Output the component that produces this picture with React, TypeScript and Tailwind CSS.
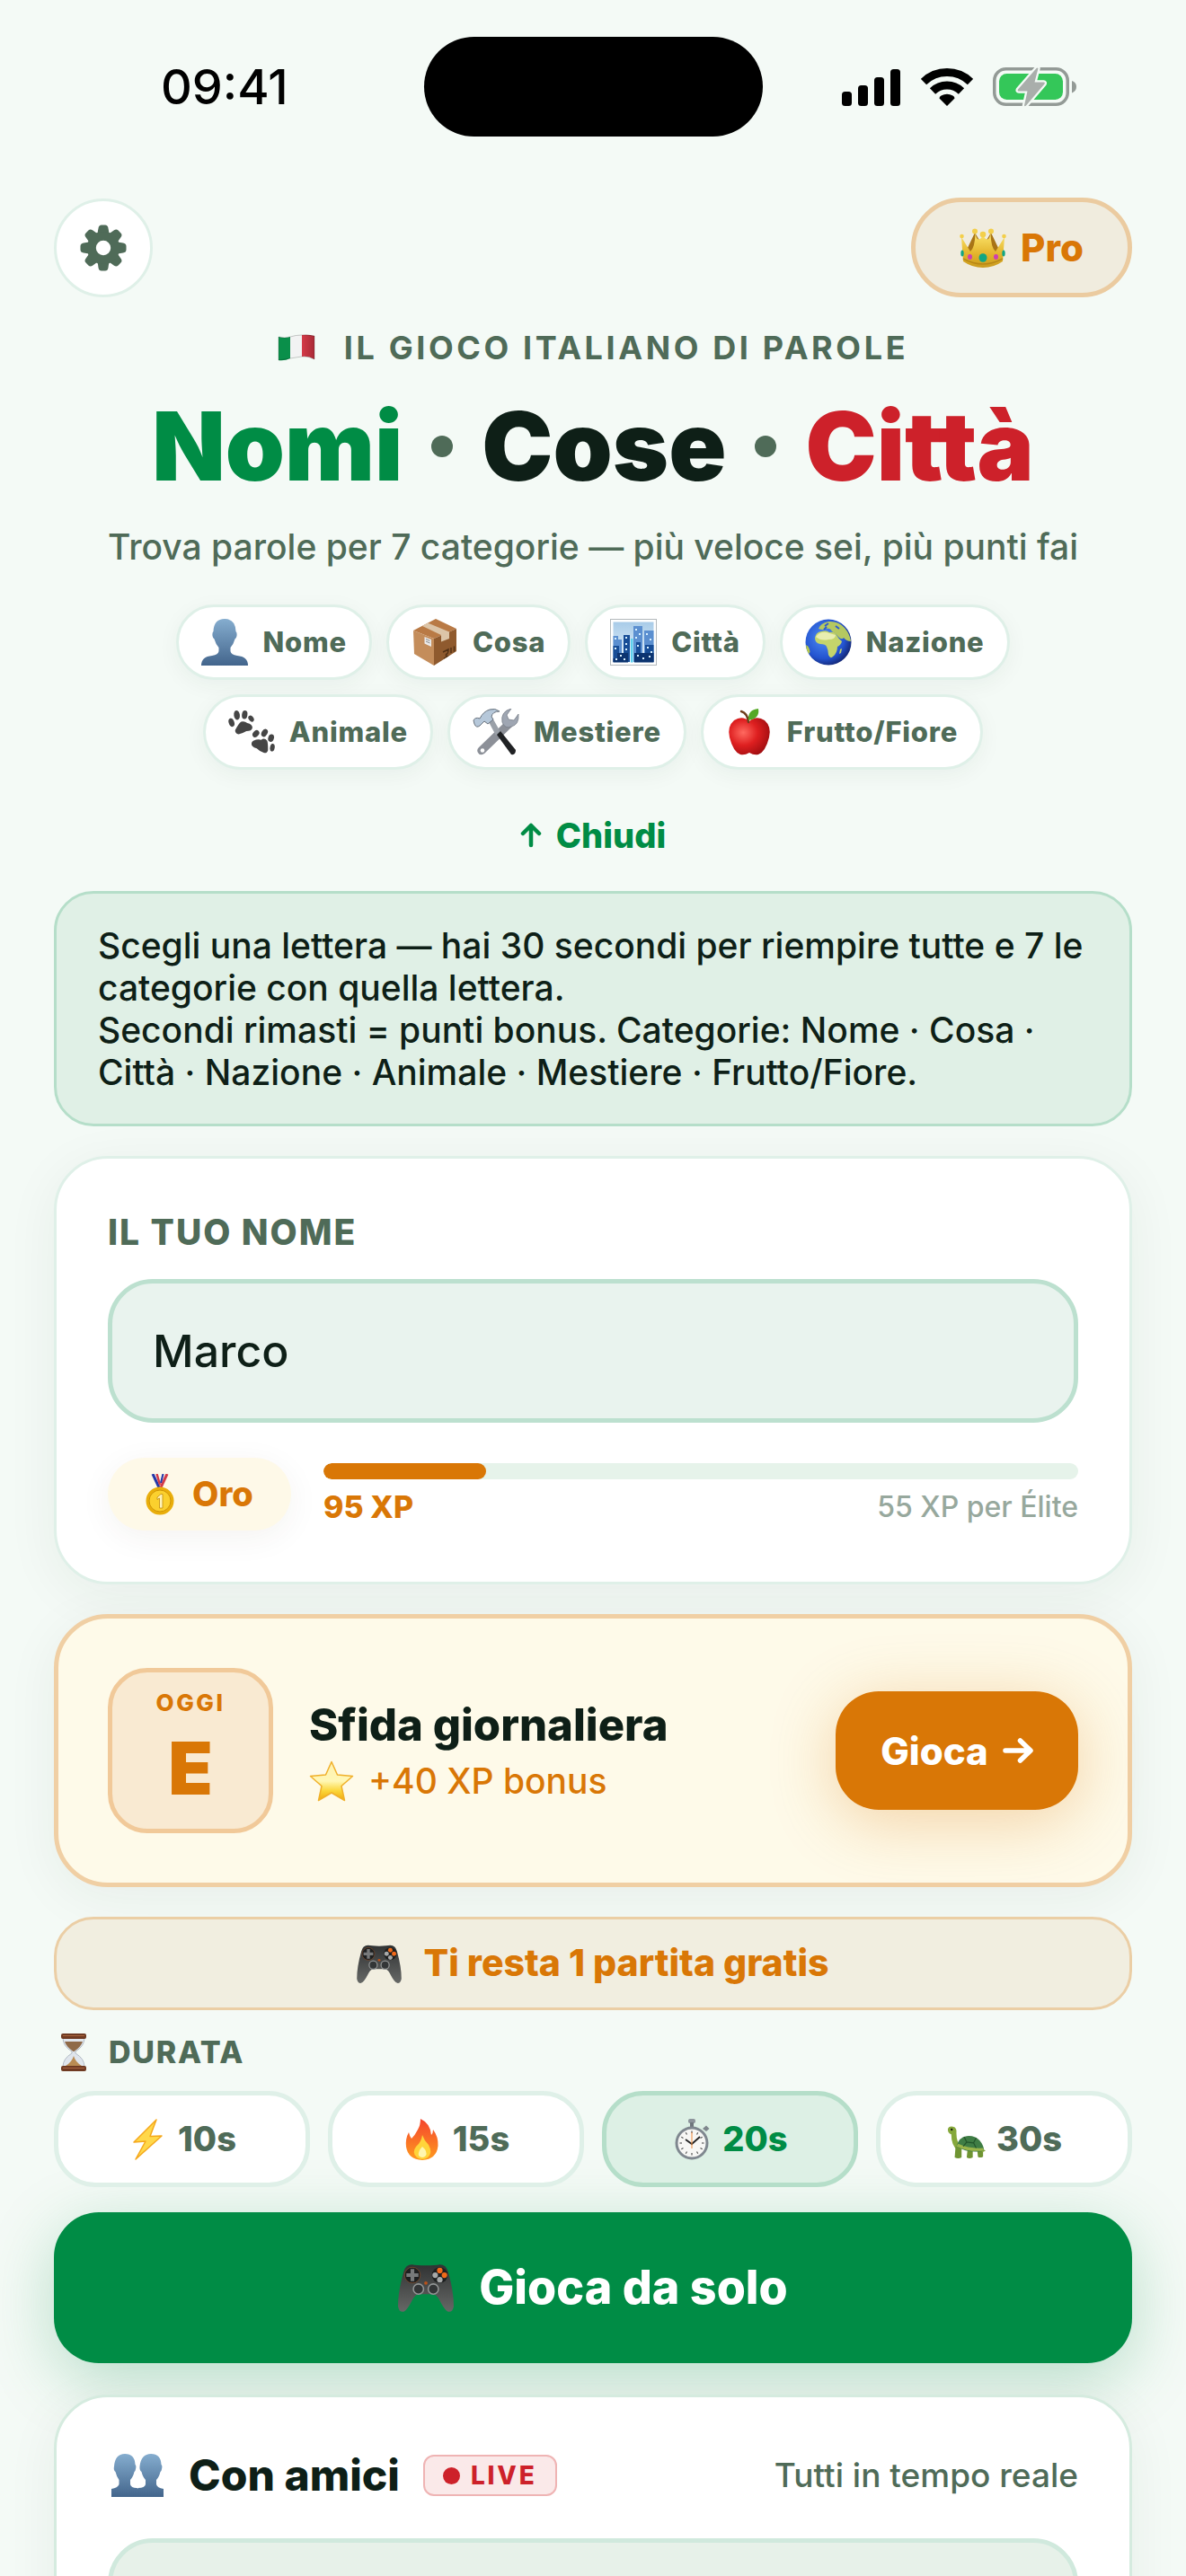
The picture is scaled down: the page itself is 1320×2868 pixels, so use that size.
import React, { useState } from 'react';

type IconProps = { className?: string };

/* ---------- Status bar icons ---------- */

const SignalIcon: React.FC<IconProps> = ({ className }) => (
  <svg className={className} viewBox="0 0 66 42" aria-hidden="true">
    <rect x="0" y="26" width="11" height="16" rx="3.5" />
    <rect x="18" y="19" width="11" height="23" rx="3.5" />
    <rect x="36" y="10" width="11" height="32" rx="3.5" />
    <rect x="54" y="1" width="11" height="41" rx="3.5" />
  </svg>
);

const WifiIcon: React.FC<IconProps> = ({ className }) => (
  <svg className={className} viewBox="0 0 58 42" aria-hidden="true">
    <g fill="none" stroke="#000" strokeWidth="9">
      <path d="M3 15A37.5 37.5 0 0 1 55 15" />
      <path d="M13 25.5A23 23 0 0 1 45 25.5" />
    </g>
    <path d="M29 42L20.5 33.5Q20.5 31.5 22.5 30.6A13.5 13.5 0 0 1 35.5 30.6Q37.5 31.5 37.5 33.5Z" />
  </svg>
);

const BatteryIcon: React.FC<IconProps> = ({ className }) => (
  <svg className={className} viewBox="0 0 94 46" aria-hidden="true">
    <rect x="1.75" y="2.75" width="81.5" height="39.5" rx="13" fill="none" stroke="#939a96" strokeWidth="3.5" />
    <rect x="7" y="8" width="71" height="29" rx="8.5" fill="#34c759" />
    <path d="M88 16Q93 17.5 93 22.5T88 29.5Z" fill="#939a96" />
    <path
      d="M48.5 2L28 25.5Q27 27.5 29 27.5H38.5L35 43.5Q35.5 44.8 37 43.5L57.5 19.5Q58.5 17.5 56.5 17.5H46.5L50.5 2Q49.5 1 48.5 2Z"
      fill="#a9aeab"
      stroke="#f4faf6"
      strokeWidth="4.5"
      strokeLinejoin="round"
      paintOrder="stroke"
    />
  </svg>
);

/* ---------- Illustrated icons ---------- */

const GearIcon: React.FC<IconProps> = ({ className }) => (
  <svg className={className} viewBox="0 0 52 52" fill="#4f6b58" aria-hidden="true">
    {[0, 45, 90, 135, 180, 225, 270, 315].map((angle) => (
      <path
        key={angle}
        d="M18 12Q20.2 9 20.5 4Q21 0.5 24 0.5H28Q31 0.5 31.5 4Q31.8 9 34 12Z"
        transform={`rotate(${angle} 26 26)`}
      />
    ))}
    <path fillRule="evenodd" d="M26 8a18 18 0 1 0 0 36a18 18 0 1 0 0-36ZM26 17.8a8.2 8.2 0 1 1 0 16.4a8.2 8.2 0 1 1 0-16.4Z" />
  </svg>
);

const CrownIcon: React.FC<IconProps> = ({ className }) => (
  <svg className={className} viewBox="0 0 52 44" aria-hidden="true">
    <defs>
      <linearGradient id="crownGold" x1="0" y1="0" x2="0" y2="1">
        <stop offset="0" stopColor="#fbe36a" />
        <stop offset="0.6" stopColor="#e3b42c" />
        <stop offset="1" stopColor="#c99a1e" />
      </linearGradient>
    </defs>
    <path d="M8 24L17 5L26 20L35 5L44 24L38 30H14Z" fill="#a87416" />
    <path d="M2 10L12 26Q17 22 17.5 6Q20 18 26 8Q32 18 34.5 6Q35 22 40 26L50 10L48 37Q38 44 26 44T4 37Z" fill="url(#crownGold)" />
    <path d="M4 34Q15 40 26 40T48 34" fill="none" stroke="#b88716" strokeWidth="1.5" />
    <g fill="#f3cf4b">
      <circle cx="2.5" cy="9" r="2.3" />
      <circle cx="17" cy="3.5" r="3" />
      <circle cx="26" cy="7" r="3.3" />
      <circle cx="35" cy="3.5" r="3" />
      <circle cx="49.5" cy="9" r="2.3" />
    </g>
    <ellipse cx="26" cy="33" rx="4.5" ry="4.8" fill="#12a683" />
    <ellipse cx="11.5" cy="32" rx="2.5" ry="3" fill="#cf3fb0" />
    <ellipse cx="40.5" cy="32" rx="2.5" ry="3" fill="#cf3fb0" />
    <ellipse cx="3" cy="28" rx="1.7" ry="3.5" fill="#12a683" />
    <ellipse cx="49" cy="28" rx="1.7" ry="3.5" fill="#12a683" />
  </svg>
);

const FlagIcon: React.FC<IconProps> = ({ className }) => (
  <svg className={className} viewBox="0 0 42 30" aria-hidden="true">
    <defs>
      <linearGradient id="flagRed" x1="0" y1="0" x2="1" y2="0">
        <stop offset="0" stopColor="#d43a48" />
        <stop offset="1" stopColor="#a82a36" />
      </linearGradient>
    </defs>
    <path d="M1 3Q8 5 14 3V27Q8 30 1 29Z" fill="#0a8f4a" />
    <path d="M14 3Q20 .5 27 1V25Q20 25 14 27Z" fill="#f2f3f3" />
    <path d="M27 1Q34 0 41 2V28Q34 24 27 25Z" fill="url(#flagRed)" />
    <path d="M1 3Q8 5 14 3T27 1T41 2V28Q34 24 27 25T14 27T1 29Z" fill="none" stroke="#000" strokeOpacity=".2" />
  </svg>
);

const PersonIcon: React.FC<IconProps> = ({ className }) => (
  <svg className={className} viewBox="0 0 52 52" aria-hidden="true">
    <defs>
      <linearGradient id="bust" x1="0" y1="0" x2="0" y2="1">
        <stop offset="0" stopColor="#85adcf" />
        <stop offset="1" stopColor="#43658c" />
      </linearGradient>
    </defs>
    <path d="M26 0Q38 0 38.5 14Q40 15 39.5 19Q39 22 37.5 22.5Q36 28 32.5 32V36Q33 40 40 41Q52 42 52 52H0Q0 42 12 41Q19 40 19.5 36V32Q16 28 14.5 22.5Q13 22 12.5 19Q12 15 13.5 14Q14 0 26 0Z" fill="url(#bust)" />
  </svg>
);

const PeopleIcon: React.FC<IconProps> = ({ className }) => (
  <svg className={className} viewBox="0 0 58 48" aria-hidden="true">
    <defs>
      <linearGradient id="busts" x1="0" y1="0" x2="0" y2="1">
        <stop offset="0" stopColor="#85adcf" />
        <stop offset="1" stopColor="#43658c" />
      </linearGradient>
    </defs>
    <path d="M44 0Q55 0 55.5 12Q57 13 56 17Q55.5 20 54.5 20Q53 26 50 29V34Q51 38 58 39V48H30V38Q37 38 38 34V29Q35 26 33.5 20Q31 18 31.5 14Q33 0 44 0Z" fill="url(#busts)" />
    <path d="M15 0Q26 0 26.5 12Q28 13 27 17Q26.5 20 25.5 20Q24 26 21 29V34Q22 38 28 38Q37 39 38 48H0V39Q7 38 8.5 34V29Q6 26 4.5 20Q2 18 3 14Q4 0 15 0Z" fill="url(#busts)" />
  </svg>
);

const PackageIcon: React.FC<IconProps> = ({ className }) => (
  <svg className={className} viewBox="0 0 52 52" aria-hidden="true">
    <path d="M2 13L27 0L50 11L25 22Z" fill="#b97a45" />
    <path d="M2 13L25 22V52L3 39Z" fill="#c48d5b" />
    <path d="M25 22L50 11V36L25 52Z" fill="#8f5a2e" />
    <path d="M12 8L18 4.5L42 14.5V22L33 25.5V18Z" fill="#dcc5a8" />
    <path d="M14.5 20L22 23V31L14.5 27.5Z" fill="#ececec" />
    <path d="M16 22.5L20.5 24.5M16 25L20.5 27" stroke="#888" strokeWidth="1" />
    <path d="M35 37L41 34Q41 39 38.5 39.5V43M36 44L41 41M44 32V38M47.5 30.5V36.5" fill="none" stroke="#4f2f14" strokeWidth="1.4" />
  </svg>
);

const CityIcon: React.FC<IconProps> = ({ className }) => (
  <svg className={className} viewBox="0 0 52 52" aria-hidden="true">
    <defs>
      <linearGradient id="citySky" x1="0" y1="0" x2="0" y2="1">
        <stop offset="0" stopColor="#a8cbe8" />
        <stop offset="1" stopColor="#eaf6fd" />
      </linearGradient>
    </defs>
    <rect x=".5" y=".5" width="51" height="51" fill="#fff" stroke="#b3b9bb" />
    <rect x="3.5" y="3.5" width="45" height="45" fill="url(#citySky)" />
    <path d="M3.5 19H9V23H13V48H3.5ZM26 8H36V48H26ZM38 13H48.5V48H38Z" fill="#5b8fd0" />
    <path d="M3.5 30H10V48H3.5ZM15 18H22V48H15ZM29 26H34V48H29ZM39 29H48.5V48H39Z" fill="#174d96" />
    <path d="M8 38H20V48.5H3.5V44H8ZM27 38H48.5V48.5H27Z" fill="#0c3470" />
    <path d="M23 22H25.5V48.5H23Z" fill="#5fd0ee" />
    <g fill="#d9f1ff">
      <path d="M5 21h2v2H5zM5 32h2v2H5zM17 20h2v2h-2zM17 27h2v2h-2zM17 33h2v2h-2zM28 11h2v2h-2zM32 16h2v2h-2zM28 20h2v2h-2zM40 16h2v2h-2zM44 22h2v2h-2zM41 31h2v2h-2zM45 36h2v2h-2zM30 29h2v2h-2zM30 40h2v2h-2zM36 43h2v2h-2zM43 41h2v2h-2zM11 40h2v2h-2zM15 44h2v2h-2zM6 44h2v2H6z" />
    </g>
  </svg>
);

const GlobeIcon: React.FC<IconProps> = ({ className }) => (
  <svg className={className} viewBox="0 0 52 52" aria-hidden="true">
    <defs>
      <radialGradient id="ocean" cx="0.4" cy="0.4" r="0.65">
        <stop offset="0" stopColor="#4f8df5" />
        <stop offset="0.7" stopColor="#2353cf" />
        <stop offset="1" stopColor="#12246f" />
      </radialGradient>
    </defs>
    <circle cx="26" cy="26" r="25.5" fill="url(#ocean)" />
    <path d="M11 21Q12 15 18 14Q24 12 27 15Q33 14 35 18Q37 22 41 25Q40 29 36 31Q36 38 31 42Q28 45 26 40Q26 35 24 31Q23 28 17 28Q11 27 11 21Z" fill="#c5d56b" />
    <path d="M12 20Q16 14 24 15L34 18Q34 23 26 23Q18 25 12 20Z" fill="#e8eeb0" />
    <path d="M15 11Q17 5 26 3Q37 2 44 10Q50 17 51 25Q46 25 43 21Q41 24 37 20Q34 16 30 14Q28 10 24 11Q20 13 15 11Z" fill="#b5c860" />
    <path d="M1 29Q5 31 5.5 37L4 39Q1 34 1 29Z" fill="#b9cb4a" />
    <path d="M39 34L41 33L40 38L38 39Z" fill="#c5d56b" />
    <path d="M22 8L26 5M34 8L38 11M21 12L24 9" stroke="#2b5bd0" strokeWidth="2" />
  </svg>
);

const PawsIcon: React.FC<IconProps> = ({ className }) => (
  <svg className={className} viewBox="0 0 54 52" fill="#454545" aria-hidden="true">
    <g>
      <ellipse cx="3.8" cy="15" rx="3.2" ry="5" transform="rotate(-18 3.8 15)" />
      <ellipse cx="10" cy="6.5" rx="3.4" ry="5.5" transform="rotate(-8 10 6.5)" />
      <ellipse cx="19" cy="6" rx="3.2" ry="5" transform="rotate(8 19 6)" />
      <ellipse cx="26.5" cy="10.5" rx="2.8" ry="4" transform="rotate(-35 26.5 10.5)" />
      <path d="M15 14Q19 13 22 15.5Q28 17 28 21Q27 25 21 25Q16 28 12 28.5Q8 28 8 24Q12 16 15 14Z" />
    </g>
    <g>
      <ellipse cx="32" cy="28" rx="3.3" ry="4.5" transform="rotate(42 32 28)" />
      <ellipse cx="42" cy="27" rx="3.3" ry="4.8" transform="rotate(30 42 27)" />
      <ellipse cx="49.5" cy="33" rx="3.3" ry="4.5" transform="rotate(18 49.5 33)" />
      <ellipse cx="51" cy="44" rx="2.7" ry="4.5" transform="rotate(10 51 44)" />
      <path d="M29 36Q34 34 38 35Q42 32 45 36Q46 38 46 47Q45 51 41 50Q37 49 33 45Q26 43 27 39Q27 37 29 36Z" />
    </g>
  </svg>
);

const ToolsIcon: React.FC<IconProps> = ({ className }) => (
  <svg className={className} viewBox="0 0 52 52" aria-hidden="true">
    <path d="M37 14L44 20L13 50Q8 53 6 49Q4 46 7 43Z" fill="#8c9098" />
    <path d="M43 0Q31 3 33 15Q36 23 43 20Q52 18 51 6L46 13L40 12L38 7Z" fill="#9fa6b2" stroke="#777d88" strokeWidth=".8" />
    <circle cx="11" cy="46.5" r="2.3" fill="#fff" />
    <path d="M17 13L22 10L31 26L26 30Z" fill="#9aa0a8" />
    <path d="M27 29L31 25L48 46Q48 52 43 51Z" fill="#202224" />
    <path d="M1 13Q3 9 8 11Q12 3 19 1Q25-1 30 3Q22 3 21 9L23 12L17 17L13 14L8 19Q4 22 2 17Z" fill="#b6c8da" stroke="#68717c" strokeWidth="1" />
  </svg>
);

const AppleIcon: React.FC<IconProps> = ({ className }) => (
  <svg className={className} viewBox="0 0 52 52" aria-hidden="true">
    <defs>
      <radialGradient id="appleRed" cx="0.35" cy="0.4" r="0.7">
        <stop offset="0" stopColor="#ff6a60" />
        <stop offset="0.5" stopColor="#de1f20" />
        <stop offset="1" stopColor="#9f0d10" />
      </radialGradient>
    </defs>
    <path d="M26 14Q34 7 43 13Q51 20 48 32Q44 48 36 51Q31 52 26 49Q21 52 16 51Q8 48 4 32Q1 20 9 13Q18 7 26 14Z" fill="url(#appleRed)" />
    <path d="M17 3Q24 5 25 15" fill="none" stroke="#6d3d1c" strokeWidth="2.5" strokeLinecap="round" />
    <path d="M25 13Q24 1 36 0Q38 11 25 13Z" fill="#55a826" />
  </svg>
);

const MedalIcon: React.FC<IconProps> = ({ className }) => (
  <svg className={className} viewBox="0 0 32 46" aria-hidden="true">
    <path d="M8 0L15 15" stroke="#2438a8" strokeWidth="3" />
    <path d="M12.5 0L16 12" stroke="#d33b48" strokeWidth="2.5" />
    <path d="M24 0L17 15" stroke="#d33b48" strokeWidth="3" />
    <path d="M19.5 0L17 10" stroke="#2438a8" strokeWidth="2" />
    <circle cx="16" cy="30" r="15.5" fill="#e9ae0b" />
    <circle cx="16" cy="30" r="12" fill="#fbd02e" stroke="#cf9407" />
    <path d="M13 26L17 22.5H19V38H15.5V27L13 28.5Z" fill="#fff3b8" stroke="#c28b0a" strokeWidth=".8" />
  </svg>
);

const StarIcon: React.FC<IconProps> = ({ className }) => (
  <svg className={className} viewBox="0 0 50 46" aria-hidden="true">
    <defs>
      <linearGradient id="starGold" x1="0" y1="0" x2="0" y2="1">
        <stop offset="0" stopColor="#fff2b0" />
        <stop offset="0.5" stopColor="#fff7b5" />
        <stop offset="0.75" stopColor="#fbd63a" />
        <stop offset="1" stopColor="#f0a90c" />
      </linearGradient>
    </defs>
    <path d="M25 1.5L31.5 16L48.5 17.5L36 28.5L39.5 44.5L25 36L10.5 44.5L14 28.5L1.5 17.5L18.5 16Z" fill="url(#starGold)" stroke="#f0b02a" strokeWidth="1.5" strokeLinejoin="round" />
  </svg>
);

const GamepadIcon: React.FC<IconProps> = ({ className }) => (
  <svg className={className} viewBox="0 0 60 52" aria-hidden="true">
    <defs>
      <linearGradient id="padBody" x1="0" y1="0" x2="0" y2="1">
        <stop offset="0" stopColor="#303233" />
        <stop offset="1" stopColor="#666866" />
      </linearGradient>
    </defs>
    <path d="M15 1Q20 2 30 2T45 1Q52 1 54 9Q60 30 60 46Q59 52 55 52Q51 52 44 38Q41 33 37 33H23Q19 33 16 38Q9 52 5 52Q1 52 0 46Q0 30 6 9Q8 1 15 1Z" fill="url(#padBody)" />
    <circle cx="15.5" cy="12.5" r="8.5" fill="#1d1f20" stroke="#7b4a2c" strokeWidth=".8" />
    <circle cx="45" cy="12.5" r="8.5" fill="#1d1f20" />
    <path d="M13.5 6h4v4.5H22v4h-4.5V19h-4v-4.5H9v-4h4.5Z" fill="#77797a" />
    <circle cx="45" cy="7.5" r="3" fill="#f26a1b" />
    <circle cx="50" cy="12.5" r="3" fill="#f26a1b" />
    <circle cx="40" cy="12.5" r="3" fill="#a7a9a9" />
    <circle cx="45" cy="17.5" r="3" fill="#a7a9a9" />
    <circle cx="30" cy="21" r="1.8" fill="#b9521b" />
    <circle cx="22" cy="27.5" r="5.5" fill="#333637" stroke="#939696" strokeWidth="1.5" />
    <circle cx="38" cy="27.5" r="5.5" fill="#333637" stroke="#939696" strokeWidth="1.5" />
  </svg>
);

const HourglassIcon: React.FC<IconProps> = ({ className }) => (
  <svg className={className} viewBox="0 0 28 42" aria-hidden="true">
    <path d="M2 5H26Q26 14 16 20V22Q26 28 26 37H2Q2 28 12 22V20Q2 14 2 5Z" fill="#dfe5ec" stroke="#b4bcc6" />
    <path d="M4 9H24Q22 15 14.5 20H13.5Q6 15 4 9Z" fill="#8f6a48" />
    <path d="M14 25Q16 32 23 36H5Q12 32 14 25Z" fill="#b98b52" />
    <rect x="0" y="0" width="28" height="6" rx="2" fill="#6f3a22" />
    <rect x="0" y="36" width="28" height="6" rx="2" fill="#6f3a22" />
    <path d="M2 2.5H26M2 38.5H26" stroke="#a9653e" />
  </svg>
);

const BoltIcon: React.FC<IconProps> = ({ className }) => (
  <svg className={className} viewBox="0 0 44 46" aria-hidden="true">
    <path d="M32 1L7 26L20 25L9 45L38 19L25 19.5Z" fill="#ffd84a" stroke="#f5a81c" strokeWidth="1.5" strokeLinejoin="round" />
  </svg>
);

const FireIcon: React.FC<IconProps> = ({ className }) => (
  <svg className={className} viewBox="0 0 44 46" aria-hidden="true">
    <defs>
      <linearGradient id="flame" x1="0" y1="0" x2="0" y2="1">
        <stop offset="0" stopColor="#f4442e" />
        <stop offset="1" stopColor="#ff9a1f" />
      </linearGradient>
    </defs>
    <path d="M20 0Q31 5 32 18Q34 16 34 12Q40 20 39.5 30Q38 45 22 46Q6 45 4 31Q3 22 7 15Q8 20 10 22Q14 18 17 12Q20 7 20 0Z" fill="url(#flame)" />
    <path d="M22 18Q24 24 29 29Q34 38 28 43Q22 47 16 43Q10 38 15 31Q21 26 22 18Z" fill="#ffd43a" />
    <path d="M22 31Q28 36 26 41Q22 45 18 41Q17 36 22 31Z" fill="#fff6b0" />
  </svg>
);

const StopwatchIcon: React.FC<IconProps> = ({ className }) => (
  <svg className={className} viewBox="0 0 44 46" aria-hidden="true">
    <rect x="18" y="0" width="8" height="5" rx="2" fill="#8d949b" />
    <rect x="20" y="4" width="4" height="5" fill="#6f767d" />
    <path d="M34 11L38 7.5L41.5 11L38 14Z" fill="#7f868d" />
    <circle cx="22" cy="27" r="18.5" fill="#7f878f" />
    <circle cx="22" cy="27" r="15.5" fill="#f7f7f5" />
    <g stroke="#555" strokeWidth="1.2">
      {[0, 30, 60, 90, 120, 150, 180, 210, 240, 270, 300, 330].map((angle) => (
        <path key={angle} d="M22 13.5V16" transform={`rotate(${angle} 22 27)`} />
      ))}
    </g>
    <path d="M15 23L22 28L31 20" fill="none" stroke="#222" strokeWidth="1.8" />
    <path d="M22 15V33" stroke="#f08a3c" strokeWidth="1" />
  </svg>
);

const TurtleIcon: React.FC<IconProps> = ({ className }) => (
  <svg className={className} viewBox="0 0 46 46" aria-hidden="true">
    <path d="M2 11Q3 7 8 8Q13 9 12 16Q12 27 18 32L14 36Q6 31 6 17Q2 16 2 11Z" fill="#86a83b" />
    <path d="M11 31H18V44Q14 46 10 44ZM25 34H31V44Q27 46 24 44ZM36 32H43V43Q39 45 37 43Z" fill="#6f9432" />
    <path d="M41 33L46 36L42 38Z" fill="#86a83b" />
    <path d="M12 31Q15 20 24 19Q33 18 39 24Q44 30 44 36Q27 40 12 31Z" fill="#3f7d45" />
    <path d="M12 31Q27 38 44 36L43 33Q27 34 14 28Z" fill="#9bb44a" />
    <path d="M21 20L24 26L20 31M24 26L32 27L35 33M32 27L35 21" fill="none" stroke="#23552b" strokeWidth="1.2" />
    <circle cx="6.5" cy="11.5" r="1.2" fill="#111" />
  </svg>
);

const ArrowRightIcon: React.FC<IconProps> = ({ className }) => (
  <svg className={className} viewBox="0 0 34 30" fill="none" stroke="currentColor" strokeWidth="5.5" strokeLinecap="round" strokeLinejoin="round" aria-hidden="true">
    <path d="M3 15H30M19.5 4L31 15L19.5 26" />
  </svg>
);

const ArrowUpIcon: React.FC<IconProps> = ({ className }) => (
  <svg className={className} viewBox="0 0 24 28" fill="none" stroke="currentColor" strokeWidth="4.5" strokeLinecap="round" strokeLinejoin="round" aria-hidden="true">
    <path d="M12 25V3M3 12L12 3L21 12" />
  </svg>
);

/* ---------- Data ---------- */

const categoryRows = [
  [
    { label: 'Nome', Icon: PersonIcon },
    { label: 'Cosa', Icon: PackageIcon },
    { label: 'Città', Icon: CityIcon },
    { label: 'Nazione', Icon: GlobeIcon },
  ],
  [
    { label: 'Animale', Icon: PawsIcon },
    { label: 'Mestiere', Icon: ToolsIcon },
    { label: 'Frutto/Fiore', Icon: AppleIcon },
  ],
];

const durations = [
  { seconds: 10, Icon: BoltIcon },
  { seconds: 15, Icon: FireIcon },
  { seconds: 20, Icon: StopwatchIcon },
  { seconds: 30, Icon: TurtleIcon },
];

/* ---------- Sections ---------- */

const StatusBar: React.FC = () => (
  <div className="grid grid-cols-[1fr_377px_1fr] items-center pt-[41px]">
    <span className="pl-[119px] text-[54px] leading-[60px] font-medium text-black">09:41</span>
    <div className="h-[111px] rounded-full bg-black" />
    <div className="flex items-center justify-end gap-[22px] pr-[61px]">
      <SignalIcon className="h-[42px] w-[66px]" />
      <WifiIcon className="h-[42px] w-[58px]" />
      <BatteryIcon className="h-[46px] w-[94px]" />
    </div>
  </div>
);

const Hero: React.FC = () => (
  <div className="flex flex-col items-center">
    <p className="flex items-center gap-8 text-[36px] leading-[48px] font-bold tracking-widest text-[#4f6b58]">
      <FlagIcon className="h-[30px] w-[42px]" />
      IL GIOCO ITALIANO DI PAROLE
    </p>
    <h1 className="mt-[26px] flex items-center gap-8 text-[106px] leading-[120px] font-black">
      <span className="text-[#008c45]">Nomi</span>
      <span className="size-6 rounded-full bg-[#4f6b58]" />
      <span className="text-[#0e1f17]">Cose</span>
      <span className="size-6 rounded-full bg-[#4f6b58]" />
      <span className="text-[#cd212a]">Città</span>
    </h1>
    <p className="mt-7 text-[39px] leading-[48px] font-medium text-[#4f6b58]">
      Trova parole per 7 categorie — più veloce sei, più punti fai
    </p>
  </div>
);

const Categories: React.FC = () => (
  <div className="mt-10 flex flex-col gap-4">
    {categoryRows.map((row, index) => (
      <ul key={index} className="flex justify-center gap-4">
        {row.map(({ label, Icon }) => (
          <li
            key={label}
            className="flex h-[84px] items-center gap-4 rounded-full border-3 border-[#dff0e8] bg-white px-[25px] text-[31px] font-extrabold tracking-wide text-[#4f6b58] shadow-[0_6px_24px_rgba(20,60,40,0.05)]"
          >
            <Icon className="size-[52px]" />
            {label}
          </li>
        ))}
      </ul>
    ))}
  </div>
);

const PlayerCard: React.FC = () => {
  const [name, setName] = useState('Marco');
  const progress = 21.5;

  return (
    <section className="rounded-[60px] border-3 border-[#dff0e8] bg-white p-[57px] shadow-[0_12px_60px_rgba(40,50,30,0.06)]">
      <label htmlFor="player-name" className="block text-[39px] leading-[50px] font-extrabold tracking-wider text-[#4f6b58]">
        IL TUO NOME
      </label>
      <input
        id="player-name"
        type="text"
        value={name}
        onChange={(e) => setName(e.target.value)}
        className="mt-[27px] block h-40 w-full rounded-[50px] border-5 border-[#bce0cf] bg-[#e9f3ee] px-[45px] text-[50px] font-medium text-[#0e1f17] outline-none"
      />

      <div className="mt-[39px] flex items-center gap-9">
        <div className="flex h-[81px] w-[204px] items-center justify-center gap-5 rounded-full bg-[#fef9e8] text-[38px] font-extrabold text-[#d97706] shadow-[0_8px_36px_rgba(60,50,20,0.06)]">
          <MedalIcon className="h-[46px] w-8" />
          Oro
        </div>
        <div className="flex-1">
          <div className="h-[18px] overflow-hidden rounded-full bg-[#e6f3ea]">
            <div className="h-full rounded-full bg-[#d97706]" style={{ width: `${progress}%` }} />
          </div>
          <div className="mt-[11px] flex justify-between leading-10">
            <span className="text-[34px] font-extrabold text-[#d97706]">95 XP</span>
            <span className="text-[32px] font-medium text-[#97a89d]">55 XP per Élite</span>
          </div>
        </div>
      </div>
    </section>
  );
};

const DailyChallenge: React.FC = () => (
  <section className="flex items-center rounded-[60px] border-5 border-[#f0cfa4] bg-[#fefae9] p-[55px] shadow-[0_12px_60px_rgba(40,50,30,0.06)]">
    <div className="flex size-[184px] flex-col items-center justify-center gap-[11px] rounded-[44px] border-5 border-[#f1c999] bg-[#f9ead2] pb-2 text-[#d97706]">
      <span className="text-[26px] leading-9 font-extrabold tracking-widest">OGGI</span>
      <span className="text-[81px] leading-[88px] font-black">E</span>
    </div>
    <div className="ml-10 flex-1">
      <h2 className="text-[49px] leading-[60px] font-extrabold text-[#0e1f17]">Sfida giornaliera</h2>
      <p className="mt-2 flex items-center gap-4 text-[39px] leading-[48px] font-medium text-[#d97706]">
        <StarIcon className="h-[46px] w-[50px]" />
        +40 XP bonus
      </p>
    </div>
    <button
      type="button"
      className="flex h-[132px] w-[270px] items-center justify-center gap-4 rounded-[48px] bg-[#d97706] text-[42px] font-extrabold text-white shadow-[0_12px_72px_rgba(217,119,6,0.3)]"
    >
      Gioca
      <ArrowRightIcon className="h-[30px] w-[34px]" />
    </button>
  </section>
);

const DurationPicker: React.FC = () => {
  const [selected, setSelected] = useState(20);

  return (
    <div className="mt-[25px]">
      <h2 id="duration-label" className="flex items-center gap-[25px] pl-2 text-[34px] leading-[44px] font-extrabold tracking-wider text-[#4f6b58]">
        <HourglassIcon className="h-[42px] w-7" />
        DURATA
      </h2>
      <div className="mt-[21px] grid grid-cols-4 gap-5" role="group" aria-labelledby="duration-label">
        {durations.map(({ seconds, Icon }) => (
          <button
            key={seconds}
            type="button"
            aria-pressed={selected === seconds}
            onClick={() => setSelected(seconds)}
            className={`flex h-[107px] items-center justify-center gap-3 rounded-[46px] border-5 text-[38px] font-extrabold ${
              selected === seconds
                ? 'border-[#b5dec9] bg-[#ddf0e5] text-[#008c45]'
                : 'border-[#dff0e8] bg-white text-[#4f6b58]'
            }`}
          >
            <Icon className="h-[46px] w-11" />
            {seconds}s
          </button>
        ))}
      </div>
    </div>
  );
};

const FriendsCard: React.FC = () => (
  <section className="mt-[35px] rounded-[60px] border-3 border-[#d5ebdf] bg-white p-[57px] shadow-[0_12px_60px_rgba(40,50,30,0.06)]">
    <div className="flex h-[60px] items-center">
      <PeopleIcon className="ml-1 h-12 w-[58px]" />
      <h2 className="ml-7 text-[48px] leading-[60px] font-extrabold text-[#0e1f17]">Con amici</h2>
      <span className="ml-[26px] flex h-[46px] items-center gap-3 rounded-xl border-2 border-[#efb4b4] bg-[#fae9e9] px-5 text-[28px] font-extrabold tracking-widest text-[#cd212a]">
        <span className="size-[19px] rounded-full bg-[#cd212a]" />
        LIVE
      </span>
      <span className="ml-auto text-[37px] font-medium text-[#4f6b58]">Tutti in tempo reale</span>
    </div>
    <div className="mt-10 h-40 rounded-[50px] border-5 border-[#d0e9dd] bg-[#e7f1e9]" />
  </section>
);

const App: React.FC = () => {
  const [showRules, setShowRules] = useState(true);

  return (
    <div className="h-screen overflow-hidden bg-[#f4faf6] px-[60px] font-['Inter','Liberation_Sans',sans-serif]">
      <StatusBar />

      <header className="mt-[68px] flex items-center justify-between">
        <button
          type="button"
          aria-label="Impostazioni"
          className="flex size-[110px] items-center justify-center rounded-full border-3 border-[#dff0e8] bg-white"
        >
          <GearIcon className="size-[52px]" />
        </button>
        <button
          type="button"
          className="flex h-[111px] w-[246px] items-center justify-center gap-4 rounded-full border-5 border-[#ebcba0] bg-[#f0ecde] text-[42px] font-extrabold text-[#d97706]"
        >
          <CrownIcon className="h-11 w-[52px]" />
          Pro
        </button>
      </header>

      <main className="mt-8">
        <Hero />
        <Categories />

        <button
          type="button"
          onClick={() => setShowRules(!showRules)}
          className="mx-auto mt-[49px] flex items-center gap-4 text-[38px] leading-[48px] font-extrabold text-[#008c45]"
        >
          <ArrowUpIcon className="h-7 w-6" />
          Chiudi
        </button>

        {showRules && (
          <div className="mt-[38px] rounded-[44px] border-3 border-[#b5dec9] bg-[#e0f0e6] px-[46px] py-[34px] text-[39px] leading-[47px] font-medium text-[#0e1f17]">
            <p>Scegli una lettera — hai 30 secondi per riempire tutte e 7 le categorie con quella lettera.</p>
            <p>Secondi rimasti = punti bonus. Categorie: Nome · Cosa · Città · Nazione · Animale · Mestiere · Frutto/Fiore.</p>
          </div>
        )}

        <div className="mt-[33px] flex flex-col gap-[33px]">
          <PlayerCard />
          <DailyChallenge />
          <p className="flex h-[104px] items-center justify-center gap-6 rounded-[44px] border-3 border-[#ebcea5] bg-[#f1eee0] text-[41px] font-extrabold text-[#d97706]">
            <GamepadIcon className="h-[43px] w-[50px]" />
            Ti resta 1 partita gratis
          </p>
        </div>

        <DurationPicker />

        <button
          type="button"
          className="mt-7 flex h-[168px] w-full items-center justify-center gap-7 rounded-[50px] bg-[#008c45] text-[52px] font-extrabold text-white shadow-[0_18px_72px_rgba(0,140,69,0.25)]"
        >
          <GamepadIcon className="h-[54px] w-[62px]" />
          Gioca da solo
        </button>

        <FriendsCard />
      </main>
    </div>
  );
};

export default App;
